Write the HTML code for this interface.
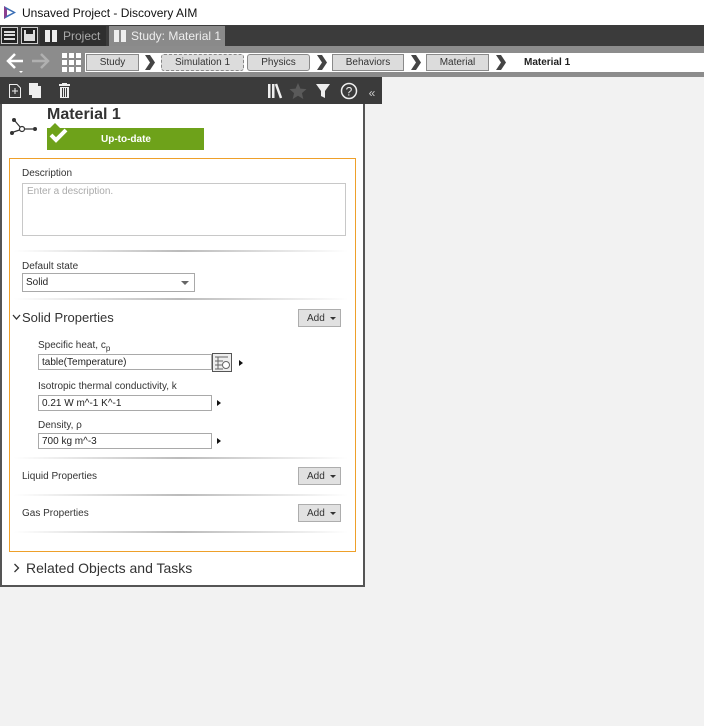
<!DOCTYPE html>
<html><head><meta charset="utf-8"><style>
*{margin:0;padding:0;box-sizing:border-box}
html,body{background:#f2f2f2}
body{width:704px;height:726px;font-family:"Liberation Sans",Arial,sans-serif;position:relative;overflow:hidden}
.a{position:absolute}
.bc{position:absolute;top:54px;height:17px;background:#dcdcdc;border:1px solid #8a8a8a;font-size:10px;color:#333;text-align:center;line-height:15px}
.lbl{position:absolute;font-size:10px;color:#333}
.inp{position:absolute;height:16px;border:1px solid #a9a9a9;background:#fff;font-size:10px;color:#222;padding-left:3px;line-height:15px}
.add{position:absolute;width:43px;height:18px;background:#e1e1e1;border:1px solid #adadad;font-size:10px;color:#333;line-height:17px;padding-left:8px}
.add:after{content:"";position:absolute;left:31px;top:7px;border-left:3px solid transparent;border-right:3px solid transparent;border-top:3px solid #333}
.sep{position:absolute;left:14px;width:334px;height:2px;background:linear-gradient(90deg,#fff,#bbb 50%,#fff)}
.tri{position:absolute;width:0;height:0;border-top:3px solid transparent;border-bottom:3px solid transparent;border-left:4px solid #111}
</style></head><body>
<div class="a" style="left:0;top:0;width:704px;height:25px;background:#fff"></div>
<svg class="a" style="left:3px;top:5px" width="14" height="15" viewBox="0 0 14 15"><path d="M1 1 L13 7.5 L1 14 Z" fill="#3b6fb6"/><path d="M4 4.5 L10 7.5 L4 10.5 Z" fill="#fff"/><path d="M1 1 L4 4.5 L4 10.5 L1 14Z" fill="#8a3f8f"/></svg>
<div class="a" style="left:22px;top:6px;font-size:12px;color:#111">Unsaved Project - Discovery AIM</div>
<div class="a" style="left:0;top:25px;width:704px;height:21px;background:#3b3b3b"></div>
<div class="a" style="left:1px;top:27px;width:17px;height:17px;border:1px solid #ccc;background:#222"></div>
<div class="a" style="left:4px;top:31px;width:11px;height:9px;border-top:2px solid #ddd;border-bottom:2px solid #ddd"></div>
<div class="a" style="left:4px;top:34px;width:11px;height:2px;background:#ddd"></div>
<div class="a" style="left:21px;top:27px;width:17px;height:17px;border:1px solid #ccc;background:#222"></div>
<div class="a" style="left:24px;top:30px;width:11px;height:11px;background:#ddd"></div>
<div class="a" style="left:26px;top:30px;width:7px;height:4px;background:#222"></div>
<div class="a" style="left:40px;top:26px;width:66px;height:20px;background:#2f2f2f"></div>
<div class="a" style="left:45px;top:30px;width:12px;height:12px;background:#eee"></div>
<div class="a" style="left:50px;top:30px;width:2px;height:12px;background:#2f2f2f"></div>
<div class="a" style="left:63px;top:29px;font-size:12px;color:#aaa">Project</div>
<div class="a" style="left:109px;top:26px;width:116px;height:20px;background:#8a8a8a"></div>
<div class="a" style="left:114px;top:30px;width:12px;height:12px;background:#eee"></div>
<div class="a" style="left:119px;top:30px;width:2px;height:12px;background:#8a8a8a"></div>
<div class="a" style="left:131px;top:29px;font-size:12px;color:#eee">Study: Material 1</div>
<div class="a" style="left:0;top:46px;width:704px;height:31px;background:#8c8c8c"></div>
<div class="a" style="left:85px;top:53px;width:619px;height:19px;background:#fff"></div>
<svg class="a" style="left:6px;top:52px" width="46" height="22" viewBox="0 0 46 22"><path d="M2 9 H17 M9 2 L2 9 L9 16" stroke="#fff" stroke-width="2.5" fill="none"/><path d="M13 19 L15 21 L17 19Z" fill="#fff"/><path d="M26 9 H42 M35 2 L42 9 L35 16" stroke="#b0b0b0" stroke-width="2.5" fill="none"/></svg>
<svg class="a" style="left:62px;top:53px" width="19" height="19" viewBox="0 0 19 19" fill="#fff"><rect x="0" y="0" width="5" height="5"/><rect x="7" y="0" width="5" height="5"/><rect x="14" y="0" width="5" height="5"/><rect x="0" y="7" width="5" height="5"/><rect x="7" y="7" width="5" height="5"/><rect x="14" y="7" width="5" height="5"/><rect x="0" y="14" width="5" height="5"/><rect x="7" y="14" width="5" height="5"/><rect x="14" y="14" width="5" height="5"/></svg>
<div class="bc" style="left:86px;width:53px">Study</div>
<svg class="a" style="left:144px;top:55px" width="12" height="15"><path d="M1 0 H6 L11 7.5 L6 15 H1 L6 7.5Z" fill="#444"/></svg>
<div class="bc" style="left:161px;width:83px;border:1px dashed #888;border-radius:3px">Simulation 1</div>
<div class="bc" style="left:247px;width:63px;border-radius:3px">Physics</div>
<svg class="a" style="left:316px;top:55px" width="12" height="15"><path d="M1 0 H6 L11 7.5 L6 15 H1 L6 7.5Z" fill="#444"/></svg>
<div class="bc" style="left:332px;width:72px">Behaviors</div>
<svg class="a" style="left:410px;top:55px" width="12" height="15"><path d="M1 0 H6 L11 7.5 L6 15 H1 L6 7.5Z" fill="#444"/></svg>
<div class="bc" style="left:426px;width:63px">Material</div>
<svg class="a" style="left:495px;top:55px" width="12" height="15"><path d="M1 0 H6 L11 7.5 L6 15 H1 L6 7.5Z" fill="#444"/></svg>
<div class="a" style="left:524px;top:57px;font-size:10px;font-weight:bold;color:#222">Material 1</div>
<div class="a" style="left:0;top:77px;width:382px;height:27px;background:#3b3b3b"></div>
<svg class="a" style="left:8px;top:83px" width="64" height="16" viewBox="0 0 64 16"><path d="M1.5 1.5 H9 L12.5 5 V14.5 H1.5Z" stroke="#eee" fill="none"/><path d="M7 5 V11 M4 8 H10" stroke="#eee"/><rect x="24" y="3" width="9" height="12" fill="#eee"/><rect x="21.5" y="0.5" width="8" height="11" fill="#3b3b3b" stroke="#eee"/><rect x="22" y="1" width="7" height="10" fill="#eee"/><rect x="51" y="1" width="11" height="2" fill="#eee"/><rect x="54" y="0" width="5" height="2" fill="#eee"/><rect x="52" y="4" width="9" height="11" fill="#eee"/><path d="M54.5 5 V14 M56.5 5 V14 M58.5 5 V14" stroke="#3b3b3b"/></svg>
<svg class="a" style="left:267px;top:82px" width="112" height="18" viewBox="0 0 112 18"><rect x="1" y="2" width="2.5" height="14" fill="#eee"/><rect x="5" y="2" width="2.5" height="14" fill="#eee"/><path d="M9 2 L14 16" stroke="#eee" stroke-width="2.5"/><path d="M31 1 L33.4 6.6 L39.5 7.1 L34.9 11.1 L36.3 17 L31 13.8 L25.7 17 L27.1 11.1 L22.5 7.1 L28.6 6.6Z" fill="#5a5a5a"/><path d="M49 2 H63 L58 9 V16 L54 14 V9Z" fill="#eee"/><circle cx="82" cy="9" r="7.5" stroke="#eee" stroke-width="1.5" fill="none"/><text x="82" y="13.5" font-size="12" fill="#eee" text-anchor="middle" font-family="Liberation Sans">?</text><text x="105" y="15" font-size="12" fill="#ccc" text-anchor="middle" font-family="Liberation Sans">«</text></svg>
<div class="a" style="left:0;top:104px;width:365px;height:483px;background:#fff;border:2px solid #555;border-top:none"></div>
<svg class="a" style="left:10px;top:118px" width="28" height="18" viewBox="0 0 28 18"><circle cx="4" cy="2" r="2" fill="#333"/><circle cx="2" cy="15" r="2" fill="#333"/><circle cx="12" cy="11" r="2.5" stroke="#333" stroke-width="1.2" fill="#fff"/><circle cx="25" cy="11" r="2" fill="#333"/><path d="M5 3 L10.5 9.5 M3.5 14 L9.5 12 M14.5 11 H23" stroke="#333" stroke-width="1.2"/></svg>
<div class="a" style="left:47px;top:106px;font-size:16px;font-weight:bold;color:#333">Material 1</div>
<div class="a" style="left:47px;top:128px;width:157px;height:22px;background:#6ea21a"></div>
<svg class="a" style="left:47px;top:122px" width="24" height="24" viewBox="0 0 24 24"><path d="M2 7 L8 1 L14 7" fill="#6ea21a"/><path d="M4 13 L9 18 L19 8" stroke="#fff" stroke-width="4" fill="none"/></svg>
<div class="a" style="left:101px;top:134px;font-size:10px;font-weight:bold;color:#fff">Up-to-date</div>
<div class="a" style="left:9px;top:158px;width:347px;height:394px;border:1px solid #eea02a"></div>
<div class="lbl" style="left:22px;top:168px">Description</div>
<div class="a" style="left:22px;top:183px;width:324px;height:53px;border:1px solid #c8c8c8"></div>
<div class="a" style="left:27px;top:186px;font-size:10px;color:#aaa">Enter a description.</div>
<div class="sep" style="top:250px"></div>
<div class="lbl" style="left:22px;top:261px">Default state</div>
<div class="inp" style="left:22px;top:273px;width:173px;height:19px;line-height:18px">Solid</div>
<div class="a" style="left:181px;top:281px;border-left:4px solid transparent;border-right:4px solid transparent;border-top:4px solid #666"></div>
<div class="sep" style="top:298px"></div>
<svg class="a" style="left:12px;top:313px" width="9" height="8"><path d="M1 2 L4.5 6 L8 2" stroke="#333" stroke-width="1.3" fill="none"/></svg>
<div class="a" style="left:22px;top:310px;font-size:13px;color:#333">Solid Properties</div>
<div class="add" style="left:298px;top:309px">Add</div>
<div class="lbl" style="left:38px;top:340px">Specific heat, c<sub style="font-size:8px">p</sub></div>
<div class="inp" style="left:38px;top:354px;width:174px">table(Temperature)</div>
<div class="a" style="left:212px;top:353px;width:20px;height:19px;border:1px solid #555;background:#eee"></div>
<svg class="a" style="left:214px;top:355px" width="16" height="15"><path d="M1 2 H14 M1 6 H9 M1 10 H8 M1 14 H9 M4 2 V14" stroke="#666"/><circle cx="12" cy="10" r="3.5" stroke="#666" fill="#fff"/></svg>
<div class="tri" style="left:239px;top:360px"></div>
<div class="lbl" style="left:38px;top:381px">Isotropic thermal conductivity, k</div>
<div class="inp" style="left:38px;top:395px;width:174px">0.21 W m^-1 K^-1</div>
<div class="tri" style="left:217px;top:400px"></div>
<div class="lbl" style="left:38px;top:420px">Density, ρ</div>
<div class="inp" style="left:38px;top:433px;width:174px">700 kg m^-3</div>
<div class="tri" style="left:217px;top:438px"></div>
<div class="sep" style="top:457px"></div>
<div class="lbl" style="left:22px;top:471px">Liquid Properties</div>
<div class="add" style="left:298px;top:467px">Add</div>
<div class="sep" style="top:494px"></div>
<div class="lbl" style="left:22px;top:508px">Gas Properties</div>
<div class="add" style="left:298px;top:504px">Add</div>
<div class="sep" style="top:531px"></div>
<svg class="a" style="left:13px;top:563px" width="7" height="10"><path d="M1.5 1 L5.5 5 L1.5 9" stroke="#333" stroke-width="1.3" fill="none"/></svg>
<div class="a" style="left:26px;top:560px;font-size:14px;color:#333">Related Objects and Tasks</div>
</body></html>
